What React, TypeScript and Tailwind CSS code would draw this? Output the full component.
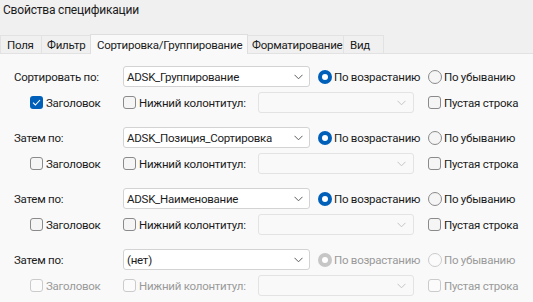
import React from "react";

type Group = {
  label: string;
  value: string;
  header: boolean;
  disabled?: boolean;
};

const groups: Group[] = [
  { label: "Сортировать по:", value: "ADSK_Группирование", header: true },
  { label: "Затем по:", value: "ADSK_Позиция_Сортировка", header: false },
  { label: "Затем по:", value: "ADSK_Наименование", header: false },
  { label: "Затем по:", value: "(нет)", header: false, disabled: true },
];

function Chevron({ disabled }: { disabled?: boolean }) {
  return (
    <svg width="9" height="6" viewBox="0 0 9 6" className="shrink-0">
      <path
        d="M0.5 0.8 L4.5 4.8 L8.5 0.8"
        fill="none"
        stroke={disabled ? "#c4c4c4" : "#5c5c5c"}
        strokeWidth="1"
      />
    </svg>
  );
}

function Checkbox({ checked, disabled, label }: { checked?: boolean; disabled?: boolean; label: string }) {
  return (
    <div className="flex items-center gap-[3px] whitespace-nowrap">
      {checked ? (
        <div className="w-[13px] h-[13px] rounded-[3px] bg-[#005fb8] flex items-center justify-center">
          <svg width="9" height="7" viewBox="0 0 9 7">
            <path d="M1 3.6 L3.4 6 L8 1" fill="none" stroke="#ffffff" strokeWidth="1.1" />
          </svg>
        </div>
      ) : (
        <div
          className={
            disabled
              ? "w-[13px] h-[13px] rounded-[3px] border border-[#cbcbcb] bg-[#fbfbfb]"
              : "w-[13px] h-[13px] rounded-[3px] border border-[#8a8a8a] bg-[#f5f5f5]"
          }
        />
      )}
      <span className={disabled ? "text-[#9a9a9a]" : "text-[#1b1b1b]"}>{label}</span>
    </div>
  );
}

function Radio({ checked, disabled, label }: { checked?: boolean; disabled?: boolean; label: string }) {
  return (
    <div className="flex items-center gap-[2px] whitespace-nowrap">
      {checked ? (
        <div
          className={
            disabled
              ? "w-[14px] h-[14px] rounded-full bg-[#c6c6c6] flex items-center justify-center"
              : "w-[14px] h-[14px] rounded-full bg-[#005fb8] flex items-center justify-center"
          }
        >
          <div className="w-[6px] h-[6px] rounded-full bg-white" />
        </div>
      ) : (
        <div
          className={
            disabled
              ? "w-[14px] h-[14px] rounded-full border border-[#cbcbcb] bg-[#fbfbfb]"
              : "w-[14px] h-[14px] rounded-full border border-[#8a8a8a] bg-[#f5f5f5]"
          }
        />
      )}
      <span className={disabled ? "text-[#9a9a9a]" : "text-[#1b1b1b]"}>{label}</span>
    </div>
  );
}

function SortGroup({ g }: { g: Group }) {
  return (
    <div className="flex flex-col gap-[5px]">
      {/* sort field row */}
      <div className="flex items-center h-[21px] pl-[14px]">
        <span className="w-[109px] shrink-0 whitespace-nowrap text-[#1b1b1b]">{g.label}</span>
        <div className="w-[187px] h-[21px] shrink-0 bg-white border border-[#d3d3d3] rounded-[3px] flex items-center justify-between pl-[3px] pr-[6px]">
          <span className="whitespace-nowrap text-[#1b1b1b]">{g.value}</span>
          <Chevron />
        </div>
        <div className="w-[118px] shrink-0 pl-[8px]">
          <Radio checked disabled={g.disabled} label="По возрастанию" />
        </div>
        <Radio disabled={g.disabled} label="По убыванию" />
      </div>
      {/* header / footer row */}
      <div className="flex items-center h-[21px] pl-[30px]">
        <div className="w-[93px] shrink-0">
          <Checkbox checked={g.header} disabled={g.disabled} label="Заголовок" />
        </div>
        <div className="w-[135px] shrink-0">
          <Checkbox disabled={g.disabled} label="Нижний колонтитул:" />
        </div>
        <div className="w-[156px] h-[21px] shrink-0 border border-[#e3e3e3] rounded-[3px] bg-[#f9f9f9] flex items-center justify-end pr-[7px]">
          <Chevron disabled />
        </div>
        <div className="pl-[14px]">
          <Checkbox disabled={g.disabled} label="Пустая строка" />
        </div>
      </div>
    </div>
  );
}

export default function App() {
  return (
    <div
      className="w-[533px] h-[302px] overflow-hidden bg-[#f0f0f0] flex flex-col text-[11.5px] leading-[16px] tracking-[-0.25px]"
      style={{ fontFamily: "Roboto, 'Noto Sans', sans-serif" }}
    >
      <div className="h-[33px] pl-[3px] pt-[2px] text-[12px] tracking-[-0.2px] text-[#1b1b1b]">
        Свойства спецификации
      </div>

      {/* tabs */}
      <div className="flex items-end h-[20px] whitespace-nowrap text-[#1b1b1b]">
        <div className="w-[42px] h-[18px] pl-[6px] bg-[#f0f0f0] border border-b-0 border-[#e2e2e2] flex items-center">
          Поля
        </div>
        <div className="w-[50px] h-[18px] pl-[5px] -ml-px bg-[#f0f0f0] border border-b-0 border-[#e2e2e2] flex items-center">
          Фильтр
        </div>
        <div className="w-[158px] h-[20px] pl-[6px] -ml-px -mb-px relative z-10 bg-[#f9f9f9] border border-b-0 border-[#dedede] flex items-center">
          Сортировка/Группирование
        </div>
        <div className="w-[97px] h-[18px] pl-[4px] -ml-px bg-[#f0f0f0] border border-b-0 border-[#e2e2e2] flex items-center">
          Форматирование
        </div>
        <div className="w-[41px] h-[18px] pl-[6px] -ml-px bg-[#f0f0f0] border border-b-0 border-[#e2e2e2] flex items-center">
          Вид
        </div>
      </div>

      {/* tab content */}
      <div className="flex-1 bg-[#f9f9f9] border-t border-[#e2e2e2] pt-[12px] flex flex-col gap-[14px]">
        {groups.map((g, i) => (
          <SortGroup key={i} g={g} />
        ))}
      </div>
    </div>
  );
}
